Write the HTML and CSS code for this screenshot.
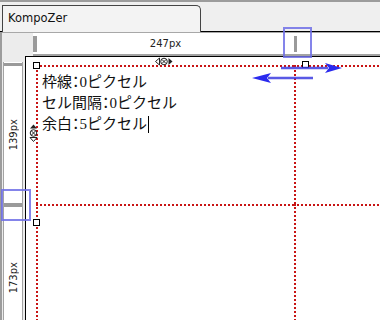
FILE: index.html
```html
<!DOCTYPE html>
<html lang="ja">
<head>
<meta charset="utf-8">
<title>KompoZer</title>
<link rel="stylesheet" href="styles.css">
</head>
<body>
<div class="app">
  <div class="tabbar">
    <div class="tab">KompoZer</div>
  </div>
  <div class="workspace">
    <div class="hrow">
      <div class="hcorner"></div>
      <div class="hruler">
        <div class="hseg">
          <span class="tick-l"></span>
          <span class="rlabel">247px</span>
          <span class="tick-r"></span>
        </div>
      </div>
    </div>
    <div class="brow">
      <div class="vcol">
        <div class="vruler">
          <div class="vmark"></div>
          <div class="vseg seg1"><span class="vlabel">139px</span></div>
          <div class="vmark vmark2"></div>
          <div class="vseg seg2"><span class="vlabel">173px</span></div>
        </div>
      </div>
      <div class="editor">
        <div class="table">
          <div class="cell c1">
            <div class="line">枠線<span class="colon">：</span>0ピクセル</div>
            <div class="line">セル間隔<span class="colon">：</span>0ピクセル</div>
            <div class="line">余白<span class="colon">：</span>5ピクセル<span class="caret"></span></div>
          </div>
          <div class="cell"></div>
          <div class="cell"></div>
          <div class="cell"></div>
        </div>
      </div>
    </div>
  </div>

  <div class="hl hl-top"></div>
  <div class="hl hl-left"></div>

  <div class="handle h1"></div>
  <div class="handle h2"></div>
  <div class="handle h3"></div>

  <svg class="widget wtop" width="18" height="9" viewBox="0 0 18 9">
    <polygon points="0.5,4.5 4.5,1 4.5,8" fill="none" stroke="#222" stroke-width="1"/>
    <circle cx="9" cy="4.5" r="3.3" fill="none" stroke="#222" stroke-width="1"/>
    <path d="M7,2.5 L11,6.5 M11,2.5 L7,6.5" stroke="#222" stroke-width="1"/>
    <polygon points="13.5,1 13.5,8 17.5,4.5" fill="#222"/>
  </svg>
  <svg class="widget wleft" width="9" height="18" viewBox="0 0 9 18">
    <polygon points="4.5,0.5 1,4.5 8,4.5" fill="#222"/>
    <circle cx="4.5" cy="9" r="3.3" fill="none" stroke="#222" stroke-width="1"/>
    <path d="M2.5,7 L6.5,11 M6.5,7 L2.5,11" stroke="#222" stroke-width="1"/>
    <polygon points="1,13.5 8,13.5 4.5,17.5" fill="none" stroke="#222" stroke-width="1"/>
  </svg>

  <svg class="arrows" width="95" height="26" viewBox="0 0 95 26">
    <line x1="31" y1="8" x2="78" y2="8" stroke="rgba(60,60,225,0.85)" stroke-width="2.5"/>
    <polygon points="92,8 75,3 79,8 75,13" fill="#2a2aee"/>
    <line x1="18" y1="18" x2="63" y2="18" stroke="rgba(60,60,225,0.85)" stroke-width="2.5"/>
    <polygon points="2,18 21,13 17,18 21,23" fill="#2a2aee"/>
  </svg>
</div>
</body>
</html>
```

FILE: styles.css
```css
html, body {
  margin: 0;
  padding: 0;
}

body {
  width: 380px;
  height: 320px;
  overflow: hidden;
  background: #ececec;
}

.app {
  position: relative;
  width: 380px;
  height: 320px;
  overflow: hidden;
  display: flex;
  flex-direction: column;
}

.tabbar {
  height: 32px;
  box-sizing: border-box;
  border-top: 2px solid #9c9c9c;
  border-bottom: 1px solid #000;
  background: #efefef;
  padding-left: 2px;
  display: flex;
  align-items: flex-end;
  flex: none;
}

.tab {
  width: 199px;
  height: 27px;
  box-sizing: border-box;
  margin-bottom: -1px;
  border: 1px solid #444;
  border-bottom: none;
  border-top-right-radius: 5px;
  background: #f3f3f3;
  padding-left: 5px;
  font-family: "DejaVu Sans", sans-serif;
  font-size: 11.5px;
  line-height: 25px;
  color: #111;
}

.workspace {
  flex: 1;
  display: flex;
  flex-direction: column;
  border-left: 2px solid #9c9c9c;
  background: #ececec;
  min-height: 0;
}

.hrow {
  height: 24px;
  box-sizing: border-box;
  border-top: 1px solid #a8a8a8;
  display: flex;
  flex: none;
}

.hcorner {
  width: 31px;
  flex: none;
}

.hruler {
  flex: 1;
  background: #fff;
  border-bottom: 2px solid #a3a3a3;
  display: flex;
}

.hseg {
  width: 264px;
  display: flex;
  align-items: center;
}

.tick-l {
  width: 4px;
  height: 16px;
  background: #9a9a9a;
}

.tick-r {
  width: 3px;
  height: 16px;
  background: #9a9a9a;
}

.rlabel {
  flex: 1;
  text-align: center;
  font-family: "DejaVu Sans", sans-serif;
  font-size: 10px;
  color: #222;
}

.brow {
  flex: 1;
  display: flex;
  min-height: 0;
}

.vcol {
  width: 23px;
  flex: none;
  padding-top: 6px;
  box-sizing: border-box;
}

.vruler {
  margin-left: 1px;
  width: 18px;
  height: 100%;
  background: #fff;
  border-left: 1px solid #a3a3a3;
  border-right: 1px solid #a3a3a3;
  padding-top: 1px;
  display: flex;
  flex-direction: column;
}

.vmark {
  height: 3px;
  background: #9a9a9a;
  flex: none;
}

.vmark2 {
  height: 4px;
}

.vseg {
  display: flex;
  align-items: center;
  justify-content: center;
  flex: none;
}

.seg1 {
  height: 137px;
}

.seg2 {
  height: 142px;
}

.vlabel {
  writing-mode: vertical-rl;
  transform: rotate(180deg);
  font-family: "DejaVu Sans", sans-serif;
  font-size: 10px;
  color: #222;
}

.editor {
  flex: 1;
  background: #fff;
  border-top: 1px solid #000;
  border-left: 1px solid #000;
  padding: 8px 0 0 10px;
  overflow: hidden;
  min-width: 0;
}

.table {
  display: grid;
  grid-template-columns: 258px 200px;
  grid-template-rows: 139px 200px;
}

.cell {
  box-sizing: border-box;
  border-top: 2px dotted #c81414;
  border-left: 2px dotted #c81414;
}

.c1 {
  padding: 4px 5px 0 4px;
  font-family: "Liberation Serif", "Noto Sans CJK JP", serif;
  font-size: 15px;
  line-height: 20px;
  color: #111;
}

.colon {
  font-family: "Noto Sans CJK JP", sans-serif;
  font-feature-settings: "halt";
}

.caret {
  display: inline-block;
  width: 0;
  height: 17px;
  border-left: 1px solid #000;
  margin-left: 1px;
  vertical-align: -4px;
}

.hl {
  position: absolute;
  box-sizing: border-box;
  border: 2px solid rgba(110, 110, 230, 0.85);
}

.hl-top {
  left: 283px;
  top: 27px;
  width: 29px;
  height: 31px;
}

.hl-left {
  left: 1px;
  top: 189px;
  width: 30px;
  height: 32px;
}

.handle {
  position: absolute;
  width: 7px;
  height: 7px;
  box-sizing: border-box;
  border: 1px solid #000;
  background: #fff;
}

.h1 {
  left: 33px;
  top: 62px;
}

.h2 {
  left: 302px;
  top: 61px;
}

.h3 {
  left: 33px;
  top: 219px;
}

.widget {
  position: absolute;
}

.wtop {
  left: 155px;
  top: 57px;
}

.wleft {
  left: 29px;
  top: 124px;
}

.arrows {
  position: absolute;
  left: 250px;
  top: 60px;
}
```
